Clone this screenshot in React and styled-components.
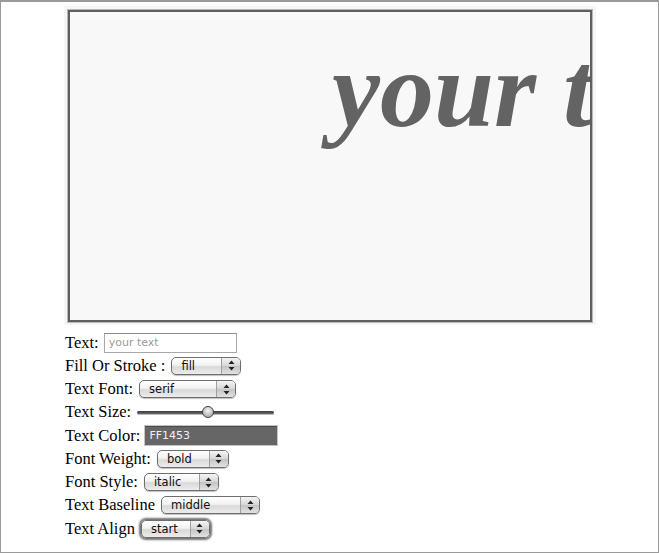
import React from 'react';
import styled, { createGlobalStyle, css } from 'styled-components';

const GlobalStyle = createGlobalStyle`
  html, body {
    margin: 0;
    padding: 0;
    background: #ffffff;
  }
`;

const Frame = styled.div`
  box-sizing: border-box;
  width: 659px;
  height: 553px;
  border: 1px solid #9a9a9a;
  border-top: 2px solid #9a9a9a;
  padding: 4px 0 0 63px;
  font-family: "Liberation Serif", "Times New Roman", serif;
  color: #000;
  overflow: hidden;
`;

const CanvasWrap = styled.div`
  box-sizing: border-box;
  width: 532px;
  height: 319px;
  padding: 4px;
  background: #f6f6f6;
`;

const Canvas = styled.div`
  box-sizing: border-box;
  width: 524px;
  height: 312px;
  border: 2px solid #5f5f5f;
  box-shadow: 0 0 0 1px #b8b8b8;
  background: #f8f8f8;
  overflow: hidden;
  padding: 24px 0 0 262px;
`;

const CanvasText = styled.div`
  font-family: "Liberation Serif", "Times New Roman", serif;
  font-size: 108px;
  font-weight: bold;
  font-style: italic;
  line-height: 108px;
  color: #636363;
  white-space: nowrap;
`;

const Form = styled.div`
  margin-top: 6px;
  padding-left: 1px;
`;

const Row = styled.div`
  display: flex;
  align-items: center;
  height: 23.25px;
  font-size: 16.5px;
  white-space: nowrap;
`;

const Label = styled.span`
  display: inline-block;
  margin-right: ${({ gap }) => gap}px;
`;

const TextInput = styled.div`
  box-sizing: border-box;
  width: 133px;
  height: 20px;
  border: 1px solid #a8a8a8;
  border-top-color: #8c8c8c;
  background: #fff;
  padding: 2px 0 0 4px;
  font-family: "DejaVu Sans", sans-serif;
  font-size: 11px;
  line-height: 14px;
  color: #9a9a9a;
`;

const ColorInput = styled(TextInput)`
  width: 134px;
  height: 21px;
  background: #666666;
  border: 1px solid #c4c4c4;
  box-shadow: inset 0 1px 0 #4a4a4a;
  color: #f0f0f0;
  padding-top: 3px;
  font-size: 11px;
`;

const SelectBox = styled.div`
  box-sizing: border-box;
  display: flex;
  width: ${({ w }) => w}px;
  height: 18px;
  border: 1px solid #6e6e6e;
  border-radius: 5px;
  background: linear-gradient(#ffffff 0%, #f2f2f2 45%, #d9d9d9 55%, #ececec 100%);
  box-shadow: 0 1px 1px rgba(0, 0, 0, 0.25);
  font-family: "DejaVu Sans", sans-serif;
  font-size: 11.5px;
  color: #111;
  ${({ focused }) =>
    focused &&
    css`
      box-shadow: 0 0 2px 2px rgba(70, 70, 70, 0.75);
    `}
`;

const SelectValue = styled.span`
  flex: 1;
  padding: 1px 0 0 9px;
  line-height: 14px;
`;

const SelectArrow = styled.span`
  width: 18px;
  display: flex;
  align-items: center;
  justify-content: center;
  border-left: 1px solid #a0a0a0;
  background: linear-gradient(#f4f4f4 0%, #d6d6d6 50%, #c4c4c4 52%, #e2e2e2 100%);
  border-radius: 0 4px 4px 0;
`;

const Slider = styled.div`
  position: relative;
  width: 137px;
  height: 14px;
  display: flex;
  align-items: center;
`;

const Track = styled.div`
  width: 100%;
  height: 3px;
  border-radius: 2px;
  background: linear-gradient(#3c3c3c, #6a6a6a);
  box-shadow: 0 1px 0 #bbb;
`;

const Thumb = styled.div`
  position: absolute;
  top: 1px;
  box-sizing: border-box;
  width: 12px;
  height: 12px;
  border-radius: 50%;
  border: 1px solid #444;
  background: radial-gradient(circle at 50% 35%, #f4f4f4, #9c9c9c);
`;

const Arrows = () => (
  <svg width="7" height="11" viewBox="0 0 7 11">
    <path d="M3.5 0.5 L6.5 4 L0.5 4 Z" fill="#222" />
    <path d="M3.5 10.5 L6.5 7 L0.5 7 Z" fill="#222" />
  </svg>
);

const Select = ({ value, width, focused }) => (
  <SelectBox w={width} focused={focused}>
    <SelectValue>{value}</SelectValue>
    <SelectArrow>
      <Arrows />
    </SelectArrow>
  </SelectBox>
);

const App = () => {
  const size = 0.52;
  return (
    <>
      <GlobalStyle />
      <Frame>
        <CanvasWrap>
          <Canvas>
            <CanvasText>your text</CanvasText>
          </Canvas>
        </CanvasWrap>
        <Form>
          <Row>
            <Label gap={5}>Text:</Label>
            <TextInput>your text</TextInput>
          </Row>
          <Row>
            <Label gap={6}>Fill Or Stroke :</Label>
            <Select value="fill" width={70} />
          </Row>
          <Row>
            <Label gap={6}>Text Font:</Label>
            <Select value="serif" width={97} />
          </Row>
          <Row>
            <Label gap={6}>Text Size:</Label>
            <Slider>
              <Track />
              <Thumb style={{ left: `${Math.round(size * 137 - 6)}px` }} />
            </Slider>
          </Row>
          <Row>
            <Label gap={4}>Text Color:</Label>
            <ColorInput>FF1453</ColorInput>
          </Row>
          <Row>
            <Label gap={6}>Font Weight:</Label>
            <Select value="bold" width={72} />
          </Row>
          <Row>
            <Label gap={6}>Font Style:</Label>
            <Select value="italic" width={75} />
          </Row>
          <Row>
            <Label gap={6}>Text Baseline</Label>
            <Select value="middle" width={99} />
          </Row>
          <Row>
            <Label gap={6}>Text Align</Label>
            <Select value="start" width={69} focused />
          </Row>
        </Form>
      </Frame>
    </>
  );
};

export default App;
